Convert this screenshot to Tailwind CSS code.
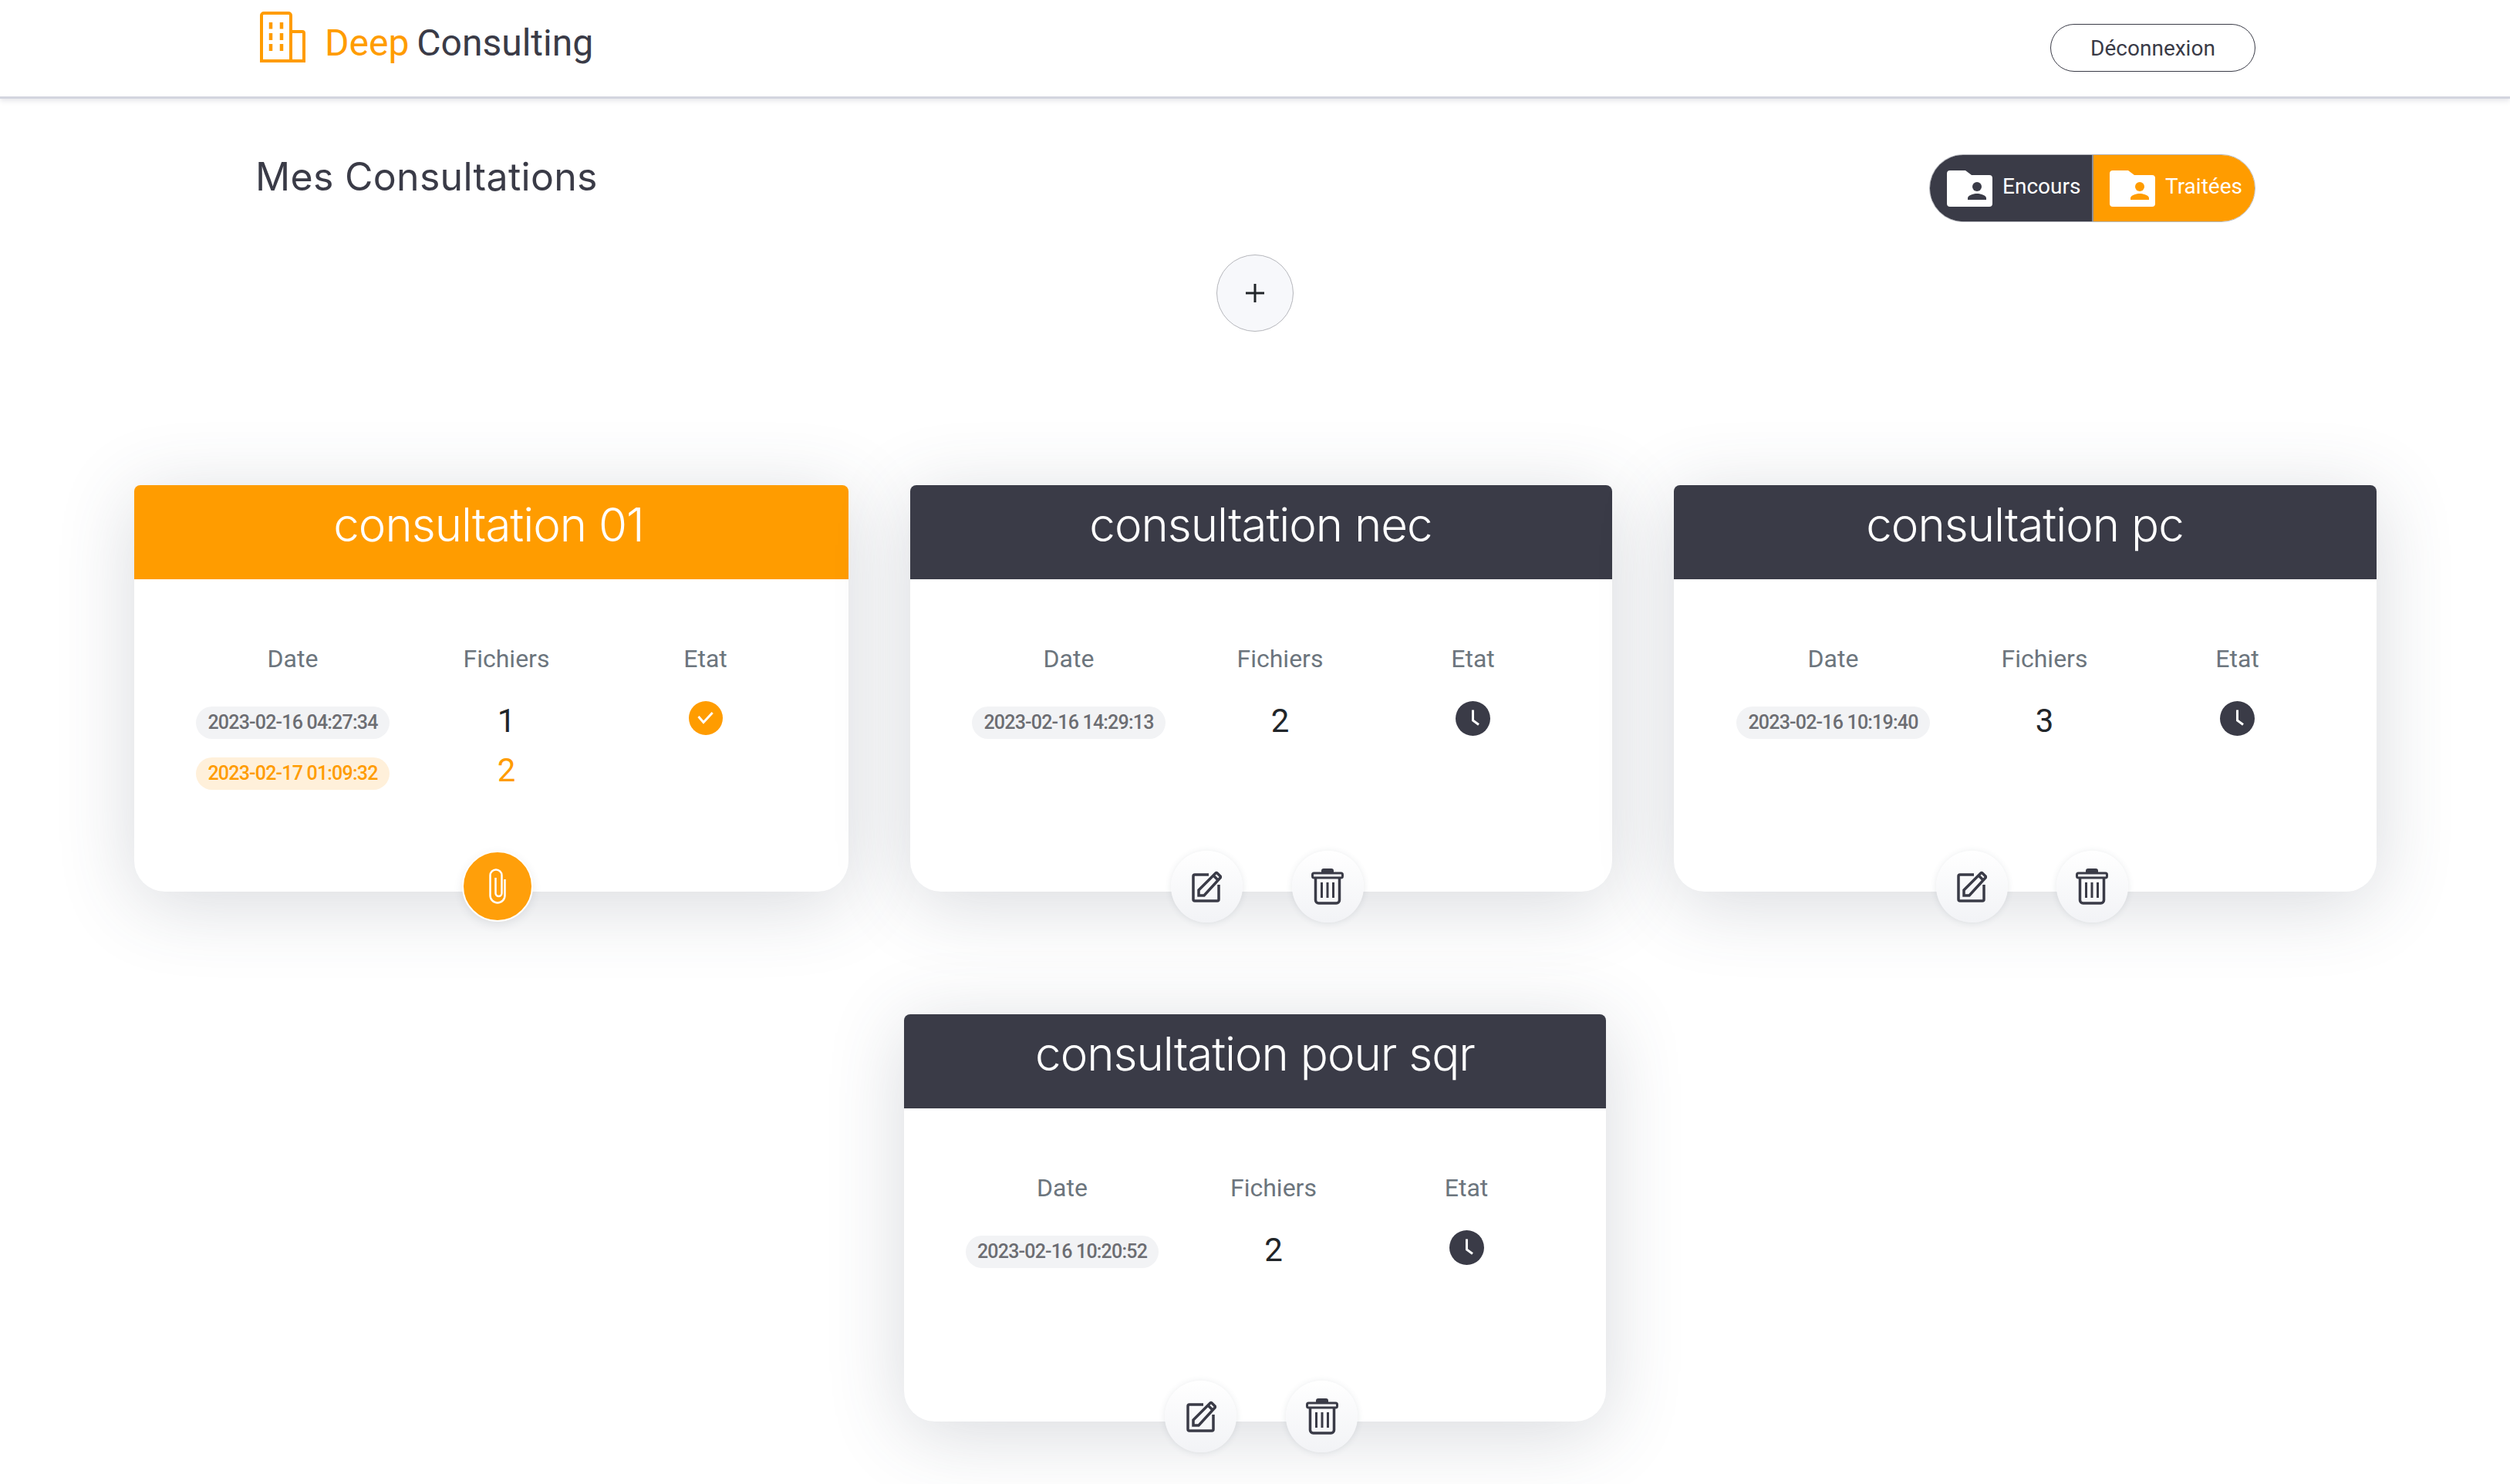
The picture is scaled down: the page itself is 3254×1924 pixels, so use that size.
<!DOCTYPE html>
<html lang="fr">
<head>
  <meta charset="UTF-8" />
  <title>Deep Consulting</title>
  <script src="https://cdn.jsdelivr.net/npm/@tailwindcss/browser@4"></script>
</head>
<body class="bg-white font-['Roboto',sans-serif] text-[#3a3b47] min-h-[1924px]">
  <!-- Top bar -->
  <header class="h-[128px] bg-white border-b-[3px] border-[#d3d5df] shadow-[0_3px_6px_rgba(58,59,90,0.12)] flex items-start justify-between pl-[336px] pr-[330px]">
    <div class="flex items-start gap-[24px] pt-[14px]">
      <svg width="61" height="68" viewBox="0 0 61 68" fill="none" stroke="#ff9c00" stroke-width="4">
        <path d="M3 65V6a3 3 0 0 1 3-3H38a3 3 0 0 1 3 3V65ZM41 27H56a2 2 0 0 1 2 2V65H41"/>
        <path stroke-width="4.5" d="M15 15v8.500M29 15v8.500M15 29v9M29 29v9M15 43v9M29 43v9"/>
      </svg>
      <div class="text-[48px] leading-[56px] pt-[14px] [word-spacing:-2px] whitespace-nowrap"><span class="text-[#ff9c00]">Deep</span> <span>Consulting</span></div>
    </div>
    <button class="mt-[31px] w-[266px] h-[62px] pt-[1px] rounded-full border-[1.5px] border-[#3a3b47] text-[28px]">Déconnexion</button>
  </header>

  <main>
    <!-- Title and filter -->
    <section class="flex items-start justify-between pl-[331px] pr-[330px] pt-[72px]">
      <h1 class="text-[50px] leading-[58px] tracking-[0.3px] font-['Inter',sans-serif] font-normal">Mes Consultations</h1>
      <div class="flex w-[423px] h-[88px] rounded-full overflow-hidden border border-[#b5b7bd] text-white text-[28px]">
        <div class="flex-1 bg-[#3a3b47] border-r-2 border-[#8d8e96] flex items-center pl-[22px] gap-[13px]">
          <svg width="59" height="47" viewBox="0 0 59 47" class="shrink-0">
            <path fill="#fff" d="M4 0H24L32 6H55a4 4 0 0 1 4 4V43a4 4 0 0 1-4 4H4a4 4 0 0 1-4-4V4a4 4 0 0 1 4-4Z"/>
            <circle cx="39" cy="21" r="6" fill="#3a3b47"/>
            <path fill="#3a3b47" d="M27 38v-2c0-4 8-6 12-6s12 2 12 6v2Z"/>
          </svg>
          <span class="-mt-[4px]">Encours</span>
        </div>
        <div class="flex-1 bg-[#ff9c00] flex items-center pl-[21px] gap-[13px]">
          <svg width="59" height="47" viewBox="0 0 59 47" class="shrink-0">
            <path fill="#fff" d="M4 0H24L32 6H55a4 4 0 0 1 4 4V43a4 4 0 0 1-4 4H4a4 4 0 0 1-4-4V4a4 4 0 0 1 4-4Z"/>
            <circle cx="39" cy="21" r="6" fill="#ff9c00"/>
            <path fill="#ff9c00" d="M27 38v-2c0-4 8-6 12-6s12 2 12 6v2Z"/>
          </svg>
          <span class="-mt-[4px]">Traitées</span>
        </div>
      </div>
    </section>

    <!-- Add button -->
    <div class="flex justify-center mt-[42px]">
      <button class="w-[100px] h-[100px] rounded-full border border-[#b5b6bb] bg-[#f7f8fb] flex items-center justify-center">
        <svg width="24" height="24" viewBox="0 0 24 24" stroke="#212529" stroke-width="3"><path d="M12 0V24M0 12H24"/></svg>
      </button>
    </div>

    <!-- Consultation cards -->
    <section class="w-[2907px] mx-auto mt-[199px] flex flex-wrap justify-center gap-x-[80px] gap-y-[159px]">

      <article class="relative w-[926px] h-[527px] bg-white rounded-t-[8px] rounded-b-[40px] shadow-[0_15px_100px_rgba(58,70,90,0.2)]">
        <h2 class="h-[122px] pt-[16px] rounded-t-[8px] bg-[#ff9c00] text-white text-center font-['Inter',sans-serif] font-light text-[60px] tracking-[-1px] leading-[70px] pr-[6px]">consultation 01</h2>
        <div class="grid grid-cols-[284px_270px_246px] pl-[64px] pt-[78px] text-center text-[32px] leading-[50px] text-[#6c757d]">
          <div>Date</div><div>Fichiers</div><div>Etat</div>
        </div>
        <div class="grid grid-cols-[284px_270px_246px] grid-rows-[48px_48px] gap-y-[18px] items-center justify-items-center pl-[64px] pt-[34px]">
          <span class="h-[42px] px-[15px] rounded-full bg-[#f2f3f5] text-[#6c6d72] text-[25px] leading-[42px] font-medium tracking-[-0.8px] whitespace-nowrap">2023-02-16 04:27:34</span>
          <span class="-mt-[4px] text-[42px] leading-[48px] text-[#212529]">1</span>
          <svg class="-mt-[12px]" width="44" height="44" viewBox="0 0 44 44"><circle cx="22" cy="22" r="22" fill="#ff9c00"/><path d="M12.5 20 19 27.5 30.7 15" fill="none" stroke="#fff" stroke-width="3"/></svg>
          <span class="h-[42px] px-[15px] rounded-full bg-[#fff0da] text-[#ff9c00] text-[25px] leading-[42px] font-medium tracking-[-0.8px] whitespace-nowrap">2023-02-17 01:09:32</span>
          <span class="-mt-[8px] text-[42px] leading-[48px] text-[#ff9c00]">2</span>
        </div>
        <button class="absolute left-[425px] -bottom-[39px] w-[92px] h-[92px] rounded-full bg-[#ff9f0a] border-2 border-white shadow-[0_4px_12px_rgba(58,70,90,0.1)] flex items-center justify-center">
          <svg width="22" height="46" viewBox="0 0 22 46" fill="none" stroke="#fff" stroke-width="2.5"><path d="M20.5 14V35a9.5 9.5 0 0 1-19 0V9a7.5 7.5 0 0 1 15 0V32a4 4 0 0 1-8 0V12"/></svg>
        </button>
      </article>

      <article class="relative w-[910px] h-[527px] bg-white rounded-t-[8px] rounded-b-[40px] shadow-[0_15px_100px_rgba(58,70,90,0.2)]">
        <h2 class="h-[122px] pt-[16px] rounded-t-[8px] bg-[#3a3b47] text-white text-center font-['Inter',sans-serif] font-light text-[60px] tracking-[-1px] leading-[70px]">consultation nec</h2>
        <div class="grid grid-cols-[282px_266px_234px] pl-[65px] pt-[78px] text-center text-[32px] leading-[50px] text-[#6c757d]">
          <div>Date</div><div>Fichiers</div><div>Etat</div>
        </div>
        <div class="grid grid-cols-[282px_266px_234px] grid-rows-[48px_48px] gap-y-[18px] items-center justify-items-center pl-[65px] pt-[34px]">
          <span class="h-[42px] px-[15px] rounded-full bg-[#f2f3f5] text-[#6c6d72] text-[25px] leading-[42px] font-medium tracking-[-0.8px] whitespace-nowrap">2023-02-16 14:29:13</span>
          <span class="-mt-[4px] text-[42px] leading-[48px] text-[#212529]">2</span>
          <svg class="-mt-[12px]" width="45" height="45" viewBox="0 0 45 45"><circle cx="22.5" cy="22.5" r="22.5" fill="#3a3b47"/><path d="M22.5 11.500V25L30 30.500" fill="none" stroke="#fff" stroke-width="3"/></svg>
        </div>
        <div class="absolute left-[338px] -bottom-[40px] flex gap-[64px]">
          <button class="w-[93px] h-[93px] rounded-full bg-gradient-to-b from-white to-[#f2f3f6] shadow-[0_1px_8px_rgba(58,70,90,0.12)] flex items-center justify-center">
            <svg width="40" height="42" viewBox="0 0 40 42" fill="none" stroke="#3a3b47" stroke-width="3.5"><path d="M23 5H5a2 2 0 0 0-2 2V37a2 2 0 0 0 2 2H34a2 2 0 0 0 2-2V18"/><path stroke-width="3.500" d="M10 32V25L30 5l2-2q1-1 2 0l4 4q1 1 0 2L17 32ZM29 6l5 5"/></svg>
          </button>
          <button class="w-[93px] h-[93px] rounded-full bg-gradient-to-b from-white to-[#f2f3f6] shadow-[0_1px_8px_rgba(58,70,90,0.12)] flex items-center justify-center">
            <svg width="42" height="47" viewBox="0 0 42 47" fill="none" stroke="#3a3b47" stroke-width="3"><path fill="#3a3b47" stroke="none" d="M13 5V3a3 3 0 0 1 3-3H26a3 3 0 0 1 3 3V5Z"/><rect x="1.5" y="6" width="39" height="6" rx="2"/><path stroke-width="3.5" d="M5.5 12V41a4 4 0 0 0 4 4H32.500a4 4 0 0 0 4-4V12"/><path d="M13.500 18V38M21 18V38M28.500 18V38"/></svg>
          </button>
        </div>
      </article>

      <article class="relative w-[911px] h-[527px] bg-white rounded-t-[8px] rounded-b-[40px] shadow-[0_15px_100px_rgba(58,70,90,0.2)]">
        <h2 class="h-[122px] pt-[16px] rounded-t-[8px] bg-[#3a3b47] text-white text-center font-['Inter',sans-serif] font-light text-[60px] tracking-[-1px] leading-[70px]">consultation pc</h2>
        <div class="grid grid-cols-[282px_266px_234px] pl-[66px] pt-[78px] text-center text-[32px] leading-[50px] text-[#6c757d]">
          <div>Date</div><div>Fichiers</div><div>Etat</div>
        </div>
        <div class="grid grid-cols-[282px_266px_234px] grid-rows-[48px_48px] gap-y-[18px] items-center justify-items-center pl-[66px] pt-[34px]">
          <span class="h-[42px] px-[15px] rounded-full bg-[#f2f3f5] text-[#6c6d72] text-[25px] leading-[42px] font-medium tracking-[-0.8px] whitespace-nowrap">2023-02-16 10:19:40</span>
          <span class="-mt-[4px] text-[42px] leading-[48px] text-[#212529]">3</span>
          <svg class="-mt-[12px]" width="45" height="45" viewBox="0 0 45 45"><circle cx="22.5" cy="22.5" r="22.5" fill="#3a3b47"/><path d="M22.5 11.500V25L30 30.500" fill="none" stroke="#fff" stroke-width="3"/></svg>
        </div>
        <div class="absolute left-[340px] -bottom-[40px] flex gap-[63px]">
          <button class="w-[93px] h-[93px] rounded-full bg-gradient-to-b from-white to-[#f2f3f6] shadow-[0_1px_8px_rgba(58,70,90,0.12)] flex items-center justify-center">
            <svg width="40" height="42" viewBox="0 0 40 42" fill="none" stroke="#3a3b47" stroke-width="3.5"><path d="M23 5H5a2 2 0 0 0-2 2V37a2 2 0 0 0 2 2H34a2 2 0 0 0 2-2V18"/><path stroke-width="3.500" d="M10 32V25L30 5l2-2q1-1 2 0l4 4q1 1 0 2L17 32ZM29 6l5 5"/></svg>
          </button>
          <button class="w-[93px] h-[93px] rounded-full bg-gradient-to-b from-white to-[#f2f3f6] shadow-[0_1px_8px_rgba(58,70,90,0.12)] flex items-center justify-center">
            <svg width="42" height="47" viewBox="0 0 42 47" fill="none" stroke="#3a3b47" stroke-width="3"><path fill="#3a3b47" stroke="none" d="M13 5V3a3 3 0 0 1 3-3H26a3 3 0 0 1 3 3V5Z"/><rect x="1.5" y="6" width="39" height="6" rx="2"/><path stroke-width="3.5" d="M5.5 12V41a4 4 0 0 0 4 4H32.500a4 4 0 0 0 4-4V12"/><path d="M13.500 18V38M21 18V38M28.500 18V38"/></svg>
          </button>
        </div>
      </article>

      <article class="relative w-[910px] h-[528px] bg-white rounded-t-[8px] rounded-b-[40px] shadow-[0_15px_100px_rgba(58,70,90,0.2)]">
        <h2 class="h-[122px] pt-[16px] rounded-t-[8px] bg-[#3a3b47] text-white text-center font-['Inter',sans-serif] font-light text-[60px] tracking-[-1px] leading-[70px]">consultation pour sqr</h2>
        <div class="grid grid-cols-[282px_266px_234px] pl-[64px] pt-[78px] text-center text-[32px] leading-[50px] text-[#6c757d]">
          <div>Date</div><div>Fichiers</div><div>Etat</div>
        </div>
        <div class="grid grid-cols-[282px_266px_234px] grid-rows-[48px_48px] gap-y-[18px] items-center justify-items-center pl-[64px] pt-[34px]">
          <span class="h-[42px] px-[15px] rounded-full bg-[#f2f3f5] text-[#6c6d72] text-[25px] leading-[42px] font-medium tracking-[-0.8px] whitespace-nowrap">2023-02-16 10:20:52</span>
          <span class="-mt-[4px] text-[42px] leading-[48px] text-[#212529]">2</span>
          <svg class="-mt-[12px]" width="45" height="45" viewBox="0 0 45 45"><circle cx="22.5" cy="22.5" r="22.5" fill="#3a3b47"/><path d="M22.5 11.500V25L30 30.500" fill="none" stroke="#fff" stroke-width="3"/></svg>
        </div>
        <div class="absolute left-[338px] -bottom-[40px] flex gap-[64px]">
          <button class="w-[93px] h-[93px] rounded-full bg-gradient-to-b from-white to-[#f2f3f6] shadow-[0_1px_8px_rgba(58,70,90,0.12)] flex items-center justify-center">
            <svg width="40" height="42" viewBox="0 0 40 42" fill="none" stroke="#3a3b47" stroke-width="3.5"><path d="M23 5H5a2 2 0 0 0-2 2V37a2 2 0 0 0 2 2H34a2 2 0 0 0 2-2V18"/><path stroke-width="3.500" d="M10 32V25L30 5l2-2q1-1 2 0l4 4q1 1 0 2L17 32ZM29 6l5 5"/></svg>
          </button>
          <button class="w-[93px] h-[93px] rounded-full bg-gradient-to-b from-white to-[#f2f3f6] shadow-[0_1px_8px_rgba(58,70,90,0.12)] flex items-center justify-center">
            <svg width="42" height="47" viewBox="0 0 42 47" fill="none" stroke="#3a3b47" stroke-width="3"><path fill="#3a3b47" stroke="none" d="M13 5V3a3 3 0 0 1 3-3H26a3 3 0 0 1 3 3V5Z"/><rect x="1.5" y="6" width="39" height="6" rx="2"/><path stroke-width="3.5" d="M5.5 12V41a4 4 0 0 0 4 4H32.500a4 4 0 0 0 4-4V12"/><path d="M13.500 18V38M21 18V38M28.500 18V38"/></svg>
          </button>
        </div>
      </article>
    </section>
  </main>
</body>
</html>
